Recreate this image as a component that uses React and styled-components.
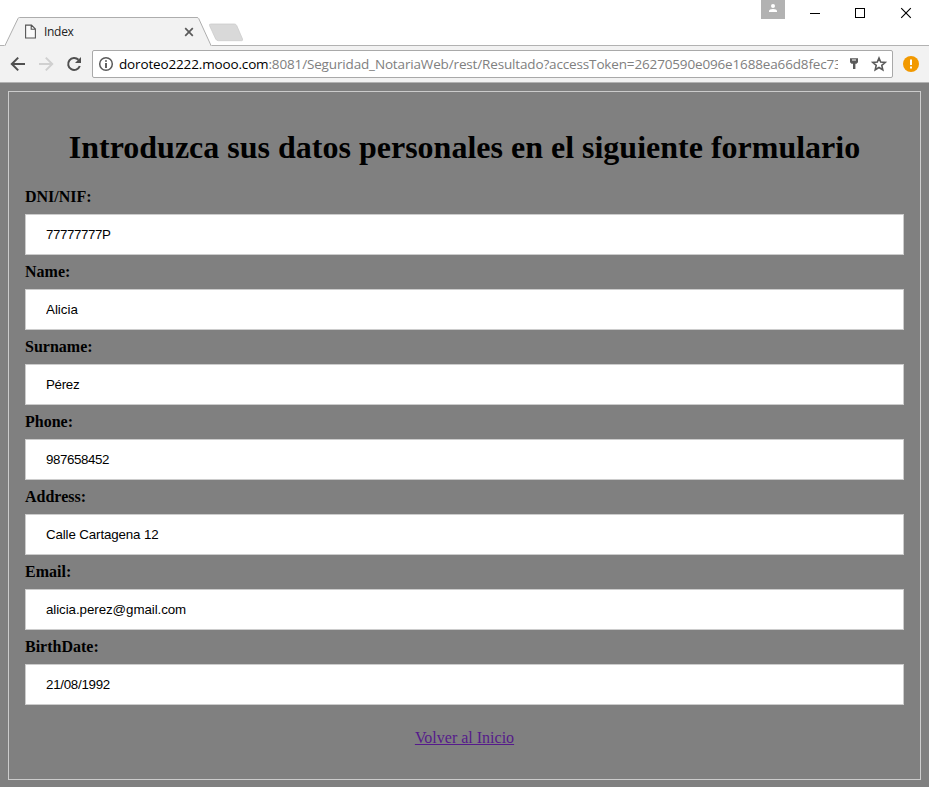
import React from "react";
import styled, { createGlobalStyle } from "styled-components";

const GlobalStyle = createGlobalStyle`
  * { box-sizing: border-box; }
  html, body { margin: 0; background: #808080; }
  body { overflow: hidden; }
`;

const Window = styled.div`
  width: 929px;
  height: 787px;
  display: flex;
  flex-direction: column;
  overflow: hidden;
`;

const TitleBar = styled.header`
  height: 46px;
  flex: none;
  display: flex;
  align-items: flex-start;
  background: linear-gradient(#b2b2b2, #b2b2b2) bottom / 100% 1px no-repeat #fff;
`;

const Tab = styled.div`
  position: relative;
  width: 208px;
  height: 29px;
  margin: 17px 0 0 4px;
  padding: 0 18px 0 21px;
  display: flex;
  align-items: center;
`;

const TabShape = styled.svg`
  position: absolute;
  inset: 0;
`;

const TabIcon = styled.svg`
  position: relative;
  flex: none;
`;

const TabTitle = styled.span`
  position: relative;
  flex: 1;
  margin: 1px 0 0 8px;
  font: 12px/16px "Open Sans", sans-serif;
  letter-spacing: -0.3px;
  color: #222;
`;

const NewTab = styled.svg`
  margin: 23px 0 0 -4px;
`;

const WindowControls = styled.div`
  display: flex;
  margin-left: auto;
`;

const UserBadge = styled.div`
  width: 24px;
  height: 19px;
  background: #b2b2b2;
`;

const ControlIcons = styled.svg`
  display: block;
`;

const Toolbar = styled.div`
  height: 37px;
  flex: none;
  display: flex;
  align-items: center;
  padding: 0 9px 1px 10px;
  background: #f2f2f2;
  border-bottom: 1px solid #b2b2b2;
`;

const NavIcons = styled.svg`
  flex: none;
`;

const AddressBar = styled.div`
  width: 801px;
  height: 28px;
  flex: none;
  display: flex;
  align-items: center;
  padding-left: 5px;
  background: #fff;
  border: 1px solid #a9a9a9;
  border-radius: 2px;
`;

const Url = styled.div`
  width: 719px;
  flex: none;
  margin: 0 1px 0 5px;
  overflow: hidden;
  white-space: nowrap;
  font: 13.5px/20px "Open Sans", sans-serif;
  letter-spacing: -0.15px;
  color: #808080;
`;

const Host = styled.span`
  color: #000;
`;

const BarIcon = styled.svg`
  flex: none;
`;

const Page = styled.main`
  flex: 1;
  padding: 8px 8px 7px;
  background: #808080;
  font-family: "Liberation Serif", "Times New Roman", serif;
  color: #000;
`;

const Form = styled.form`
  height: 689px;
  padding: 37px 16px 0;
  border: 1px solid #ccc;
`;

const Heading = styled.h1`
  margin: 0 0 22px;
  text-align: center;
  white-space: nowrap;
  font-size: 32px;
  line-height: 37px;
`;

const Field = styled.label`
  display: flex;
  flex-direction: column;
  height: 75px;
`;

const Caption = styled.b`
  font-size: 16px;
  line-height: 18px;
  margin-bottom: 8px;
`;

const Input = styled.input`
  width: 100%;
  height: 41px;
  padding: 0 20px;
  border: 1px solid #ccc;
  border-radius: 0;
  background: #fff;
  color: #000;
  font: 13.333px "Liberation Sans", Arial, sans-serif;
  letter-spacing: ${({ $tracking }) => $tracking}px;
`;

const Footer = styled.div`
  margin-top: 16px;
  text-align: center;
  font-size: 16px;
  line-height: 18px;
`;

const Link = styled.a`
  color: #551a8b;
  text-decoration: underline;
`;

const fields = [
  { label: "DNI/NIF:", value: "77777777P", tracking: -0.4 },
  { label: "Name:", value: "Alicia", tracking: 0 },
  { label: "Surname:", value: "Pérez", tracking: -0.3 },
  { label: "Phone:", value: "987658452", tracking: -0.41 },
  { label: "Address:", value: "Calle Cartagena 12", tracking: -0.13 },
  { label: "Email:", value: "alicia.perez@gmail.com", tracking: -0.07 },
  { label: "BirthDate:", value: "21/08/1992", tracking: -0.27 },
];

export default function App() {
  return (
    <Window>
      <GlobalStyle />
      <TitleBar>
        <Tab>
          <TabShape width="208" height="29" viewBox="0 0 208 29">
            <path d="M0 28.5H1.5L14 1.5Q14.4.5 15.5.5H193Q194.2.5 194.7 1.5L206.5 28.5H208V29H0Z" fill="#f2f2f2" />
            <path d="M1 28.5L14 1.5Q14.4.5 15.5.5H193Q194.2.5 194.7 1.5L207 28.5" fill="none" stroke="#adadad" />
          </TabShape>
          <TabIcon width="11" height="15" viewBox="0 0 11 15">
            <path d="M.6 1.1H6.5L10.4 5V14H.6ZM6.2 1.3V5.3H10.2" fill="#fafafa" stroke="#555" strokeWidth="1.1" />
          </TabIcon>
          <TabTitle>Index</TabTitle>
          <TabIcon width="10" height="10" viewBox="0 0 10 10">
            <path d="M1.2 1.2L8.8 8.8M8.8 1.2L1.2 8.8" stroke="#5a5a5a" strokeWidth="1.7" />
          </TabIcon>
        </Tab>
        <NewTab width="37" height="19" viewBox="0 0 37 19">
          <path d="M3 1H26.5Q28 1 28.7 2.5L34.5 16Q35.2 17.7 33.5 17.7H10.5Q8.5 17.7 7.7 16L1.5 2.5Q.8 1 3 1Z" fill="#d9d9d9" stroke="#cbcbcb" strokeWidth=".8" />
        </NewTab>
        <WindowControls>
          <UserBadge>
            <ControlIcons width="24" height="19" viewBox="0 0 24 19">
              <circle cx="12" cy="6" r="2" fill="#fff" />
              <path d="M8 12V11Q8.2 9 12 9T16 11V12Z" fill="#fff" />
            </ControlIcons>
          </UserBadge>
          <ControlIcons width="144" height="28" viewBox="0 0 144 28">
            <g fill="none" stroke="#000">
              <path d="M25 13.5H35" />
              <rect x="70.5" y="8.5" width="9" height="9" />
              <path d="M116.2 8.2L125.8 17.8M125.8 8.2L116.2 17.8" strokeWidth="1.15" />
            </g>
          </ControlIcons>
        </WindowControls>
      </TitleBar>
      <Toolbar>
        <NavIcons width="82" height="28" viewBox="0 0 82 28">
          <g fill="none" strokeWidth="2">
            <path d="M15 14H2.5M8.2 7.6L1.8 14L8.2 20.4" stroke="#505050" />
            <path d="M29 14H41.5M35.8 7.6L42.2 14L35.8 20.4" stroke="#d0d0d0" />
            <path d="M68.5 9.8A6 6 0 1 0 69.8 16" stroke="#505050" />
          </g>
          <path d="M71 7V13H65Z" fill="#505050" />
        </NavIcons>
        <AddressBar>
          <BarIcon width="16" height="16" viewBox="0 0 16 16">
            <circle cx="8" cy="8" r="6.3" fill="none" stroke="#5a5a5a" strokeWidth="1.5" />
            <path d="M8 4.2V5.8M8 7V12" stroke="#5a5a5a" strokeWidth="1.9" />
          </BarIcon>
          <Url>
            <Host>doroteo2222.mooo.com</Host>:8081/Seguridad_NotariaWeb/rest/Resultado?accessToken=26270590e096e1688ea66d8fec73
          </Url>
          <BarIcon width="50" height="26" viewBox="0 0 50 26">
            <path d="M11 7.2H19V11.2L17.5 12.8H16.4V18H14V12.8H12.5L11 11.2Z" fill="#5a5a5a" />
            <path d="M13 9H17" stroke="#fff" />
            <path d="M40 7L41.7 11.1L46.2 11.5L42.8 14.4L43.8 18.8L40 16.5L36.2 18.8L37.2 14.4L33.8 11.5L38.3 11.1Z" fill="none" stroke="#5a5a5a" strokeWidth="1.6" />
          </BarIcon>
        </AddressBar>
        <BarIcon width="36" height="18" viewBox="0 0 36 18">
          <circle cx="18" cy="9" r="8" fill="#f29900" />
          <path d="M18 4.5V10M18 11.5V13.5" stroke="#fff" strokeWidth="2" />
        </BarIcon>
      </Toolbar>
      <Page>
        <Form>
          <Heading>Introduzca sus datos personales en el siguiente formulario</Heading>
          {fields.map(({ label, value, tracking }) => (
            <Field key={label}>
              <Caption>{label}</Caption>
              <Input type="text" defaultValue={value} $tracking={tracking} />
            </Field>
          ))}
          <Footer>
            <Link href="#">Volver al Inicio</Link>
          </Footer>
        </Form>
      </Page>
    </Window>
  );
}
